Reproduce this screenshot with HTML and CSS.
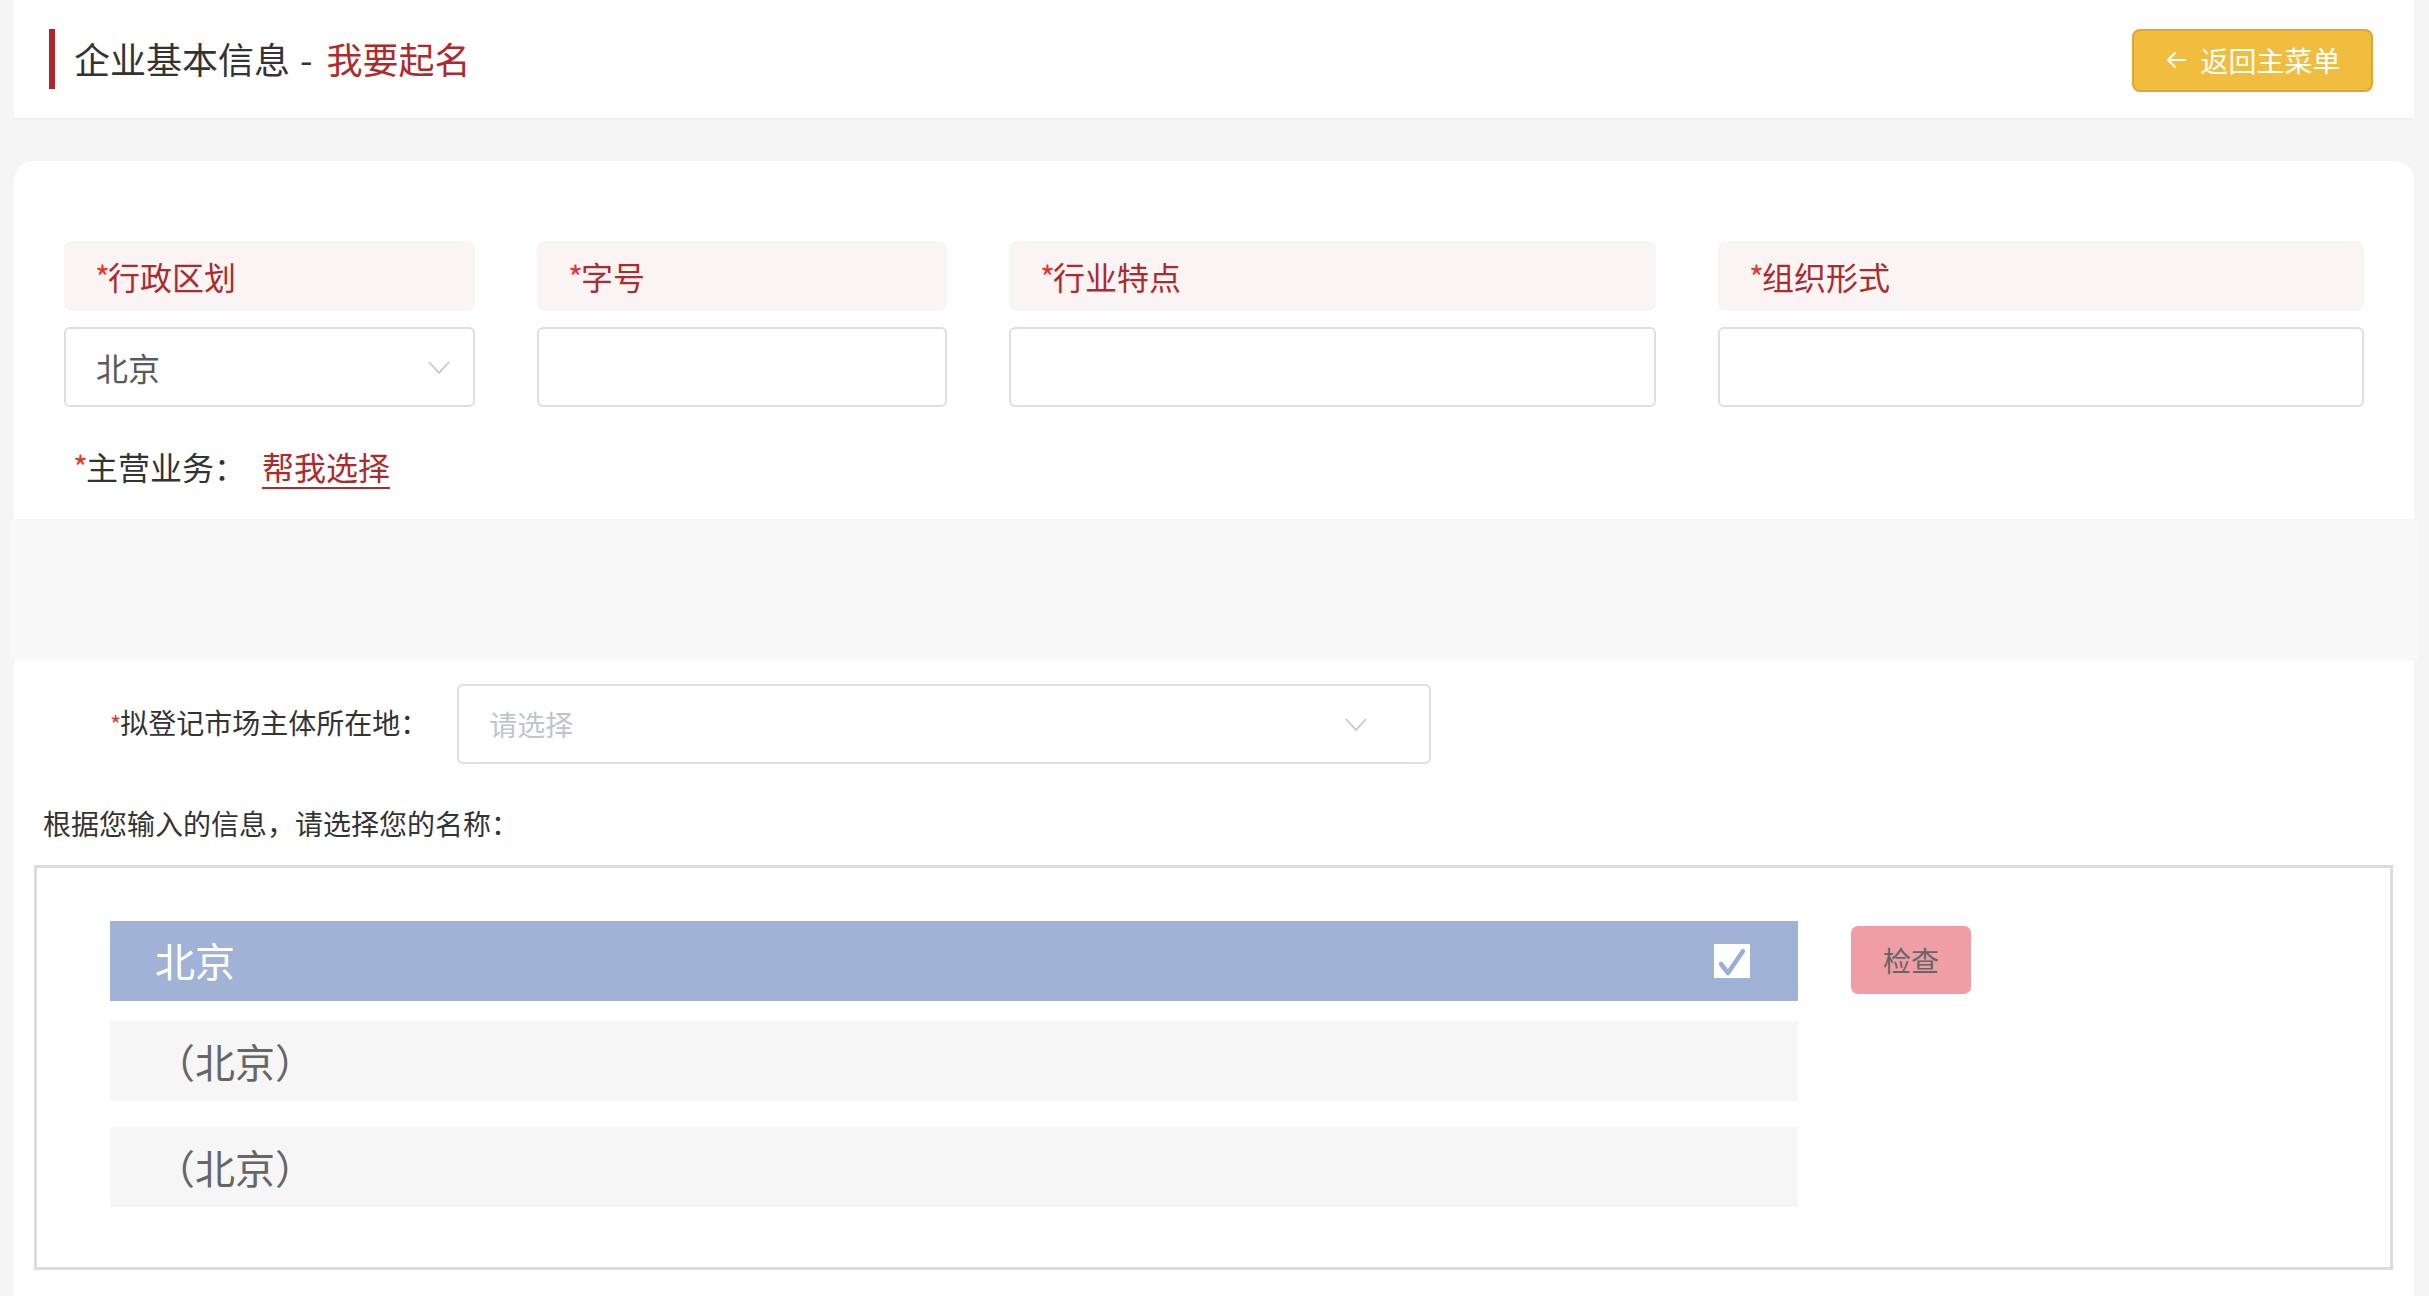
FILE: index.html
```html
<!DOCTYPE html>
<html lang="zh-CN">
<head>
<meta charset="utf-8">
<title>企业基本信息 - 我要起名</title>
<link rel="stylesheet" href="styles.css">
</head>
<body>
<header class="topbar">
  <h1 class="page-title"><span class="title-main">企业基本信息</span><span class="title-sep">-</span><span class="title-sub">我要起名</span></h1>
  <button class="back-btn" type="button">
    <svg class="back-arrow" width="20" height="18" viewBox="0 0 20 18"><path d="M19 9H2M9 2L2 9l7 7" fill="none" stroke="#fff" stroke-width="2" stroke-linecap="round" stroke-linejoin="round"/></svg>
    <span>返回主菜单</span>
  </button>
</header>
<main class="content">
  <section class="form-card">
    <div class="field-grid">
      <div class="field-label"><span class="req">*</span>行政区划</div>
      <div class="field-label"><span class="req">*</span>字号</div>
      <div class="field-label"><span class="req">*</span>行业特点</div>
      <div class="field-label"><span class="req">*</span>组织形式</div>
      <div class="field-input field-select"><span class="value">北京</span>
        <svg class="chevron" width="22" height="13" viewBox="0 0 22 13"><path d="M1 1l10 11L21 1" fill="none" stroke="#c0c4cc" stroke-width="1.6"/></svg>
      </div>
      <div class="field-input"></div>
      <div class="field-input"></div>
      <div class="field-input"></div>
    </div>
    <div class="business-row"><span class="req">*</span>主营业务：<a class="help-link" href="#">帮我选择</a></div>
  </section>
  <div class="band"></div>
  <section class="result">
    <div class="location-row">
      <label class="location-label"><span class="req small">*</span>拟登记市场主体所在地：</label>
      <div class="location-select"><span class="placeholder">请选择</span>
        <svg class="chevron" width="22" height="13" viewBox="0 0 22 13"><path d="M1 1l10 11L21 1" fill="none" stroke="#c0c4cc" stroke-width="1.6"/></svg>
      </div>
    </div>
    <p class="hint">根据您输入的信息，请选择您的名称：</p>
    <div class="name-box">
      <ul class="name-list">
        <li class="name-item selected"><span>北京</span>
          <span class="check"><svg width="36" height="34" viewBox="0 0 36 34"><path d="M7 20l7 9L29 7" fill="none" stroke="#98aed6" stroke-width="4.5" stroke-linecap="round" stroke-linejoin="round"/></svg></span>
        </li>
        <li class="name-item plain">（北京）</li>
        <li class="name-item plain">（北京）</li>
      </ul>
      <button class="check-btn" type="button">检查</button>
    </div>
  </section>
</main>
</body>
</html>
```
FILE: styles.css
```css
* { box-sizing: border-box; }

html, body {
  margin: 0;
  padding: 0;
}

body {
  background: #f5f5f5;
  font-family: "Noto Sans CJK SC", "Microsoft YaHei", "Noto Sans", sans-serif;
  color: #333;
}

/* ---------- top bar ---------- */
.topbar {
  margin: 0 15px 0 14px;
  height: 119px;
  background: #fff;
  border-bottom: 1px solid #ececec;
  display: flex;
  align-items: center;
  justify-content: space-between;
  padding: 0 41px 0 35px;
}

.page-title {
  margin: 0;
  font-size: 36px;
  font-weight: normal;
  line-height: 60px;
  border-left: 6px solid #b0262c;
  padding-left: 19px;
  display: flex;
  align-items: center;
  color: #333;
}

.title-main,
.title-sep,
.title-sub {
  position: relative;
  top: -1px;
}

.title-sep {
  margin: 0 14px 0 10px;
}

.title-sub {
  color: #ad2a2d;
}

.back-btn {
  width: 241px;
  height: 63px;
  background: #f0bd3e;
  border: 2px solid #e3a436;
  border-radius: 8px;
  color: #fff;
  font-family: inherit;
  font-size: 28px;
  display: flex;
  align-items: center;
  justify-content: center;
  gap: 14px;
  padding: 0 0 0 2px;
  margin-top: 2px;
}

.back-arrow {
  display: block;
}

/* ---------- content ---------- */
.content {
  margin: 42px 15px 0 14px;
}

.form-card {
  background: #fff;
  border-radius: 20px 20px 0 0;
  padding: 80px 51px 31px 50px;
}

.field-grid {
  display: grid;
  grid-template-columns: 411px 410px 647px 646px;
  grid-template-rows: 70px 80px;
  column-gap: 62px;
  row-gap: 16px;
}

.field-label {
  background: #fbf4f4;
  border-radius: 8px;
  padding-left: 31px;
  font-size: 32px;
  line-height: 70px;
  color: #ad2a2d;
}

.req {
  color: #e5362f;
  letter-spacing: -2px;
}

.req.small {
  font-size: 24px;
  letter-spacing: -1px;
}

.field-input {
  border: 2px solid #dcdfe6;
  border-radius: 6px;
  background: #fff;
}

.field-select {
  display: flex;
  align-items: center;
  justify-content: space-between;
  padding: 0 23px 0 30px;
}

.field-select .value {
  font-size: 32px;
  color: #5a5a5a;
}

.chevron {
  display: block;
}

.business-row {
  margin-top: 37px;
  padding-left: 9px;
  font-size: 32px;
  line-height: 44px;
  color: #333;
}

.help-link {
  color: #ad2a2d;
  text-decoration: underline;
  text-decoration-thickness: 2px;
  text-underline-offset: 7px;
  margin-left: 16px;
}

.band {
  height: 141px;
  background: #f8f8f8;
  margin: 1px -4px 0;
}

/* ---------- result ---------- */
.result {
  background: #fff;
  padding: 23px 0 60px;
}

.location-row {
  display: flex;
  align-items: center;
  padding-left: 96px;
}

.location-label {
  font-size: 28px;
  line-height: 40px;
  color: #333;
  margin-right: 29px;
  position: relative;
  top: -1px;
}

.location-select {
  width: 974px;
  height: 80px;
  border: 2px solid #dcdfe6;
  border-radius: 6px;
  display: flex;
  align-items: center;
  justify-content: space-between;
  padding: 0 62px 0 30px;
}

.placeholder {
  font-size: 28px;
  color: #c0c4cc;
}

.hint {
  margin: 39px 0 22px 29px;
  font-size: 28px;
  line-height: 40px;
  color: #333;
}

.name-box {
  margin: 0 21px 0 20px;
  border: 3px solid #dcdcdc;
  padding: 53px 0 60px 73px;
  display: flex;
  align-items: flex-start;
}

.name-list {
  list-style: none;
  margin: 0;
  padding: 0;
  width: 1688px;
  display: flex;
  flex-direction: column;
  gap: 20px;
}

.name-item {
  height: 80px;
  padding: 0 48px 0 45px;
  font-size: 40px;
  line-height: 80px;
  background: #f6f6f6;
  color: #666;
}

.name-item.plain + .name-item.plain {
  margin-top: 6px;
}

.name-item.selected {
  background: #a0b3d6;
  color: #fff;
  display: flex;
  align-items: center;
  justify-content: space-between;
}

.name-item.selected > span:first-child {
  position: relative;
  top: -1px;
}

.check {
  width: 36px;
  height: 34px;
  background: #fff;
  display: block;
}

.check svg {
  display: block;
}

.check-btn {
  margin: 5px 0 0 53px;
  width: 120px;
  height: 68px;
  background: #ef9ea5;
  border: none;
  border-radius: 7px;
  color: #666;
  font-family: inherit;
  font-size: 28px;
  padding-bottom: 2px;
}
```
